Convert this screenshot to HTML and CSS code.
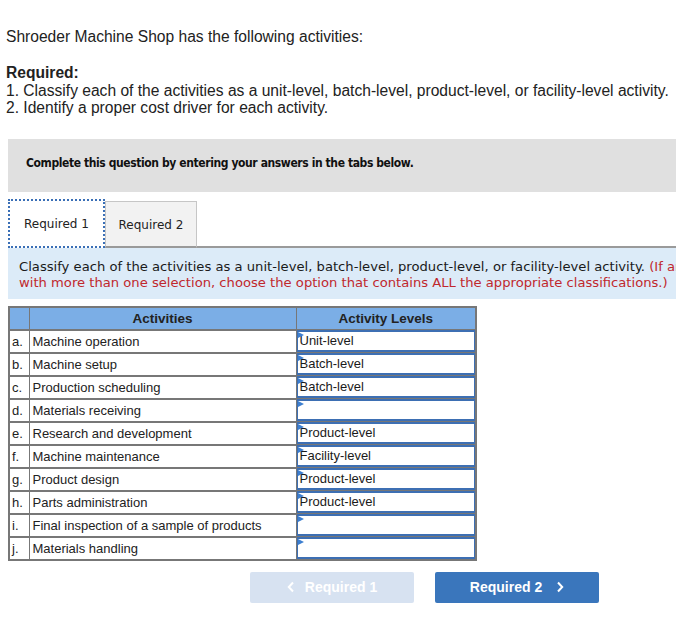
FILE: index.html
```html
<!DOCTYPE html>
<html>
<head>
<meta charset="utf-8">
<link rel="stylesheet" href="styles.css">
</head>
<body>
<div class="page">
  <p class="intro">Shroeder Machine Shop has the following activities:</p>
  <p class="req"><b>Required:</b><br>1. Classify each of the activities as a unit-level, batch-level, product-level, or facility-level activity.<br>2. Identify a proper cost driver for each activity.</p>

  <div class="panel">
    <div class="banner">Complete this question by entering your answers in the tabs below.</div>

    <div class="tabs">
      <div class="tab tab-active">Required 1</div>
      <div class="tab">Required 2</div>
      <div class="tab-rest"></div>
    </div>

    <div class="instr">Classify each of the activities as a unit-level, batch-level, product-level, or facility-level activity. <span class="warn">(If an activity qualifies</span><br><span class="warn">with more than one selection, choose the option that contains ALL the appropriate classifications.)</span></div>

    <table class="grid">
      <colgroup><col class="w-let"><col class="w-act"><col class="w-lvl"></colgroup>
      <thead>
        <tr><th></th><th>Activities</th><th>Activity Levels</th></tr>
      </thead>
      <tbody>
        <tr><td class="c-let">a.</td><td class="c-act">Machine operation</td><td class="c-lvl"><div class="sel"><span class="tri"></span>Unit-level</div></td></tr>
        <tr><td class="c-let">b.</td><td class="c-act">Machine setup</td><td class="c-lvl"><div class="sel"><span class="tri"></span>Batch-level</div></td></tr>
        <tr><td class="c-let">c.</td><td class="c-act">Production scheduling</td><td class="c-lvl"><div class="sel"><span class="tri"></span>Batch-level</div></td></tr>
        <tr><td class="c-let">d.</td><td class="c-act">Materials receiving</td><td class="c-lvl"><div class="sel"><span class="tri"></span></div></td></tr>
        <tr><td class="c-let">e.</td><td class="c-act">Research and development</td><td class="c-lvl"><div class="sel"><span class="tri"></span>Product-level</div></td></tr>
        <tr><td class="c-let">f.</td><td class="c-act">Machine maintenance</td><td class="c-lvl"><div class="sel"><span class="tri"></span>Facility-level</div></td></tr>
        <tr><td class="c-let">g.</td><td class="c-act">Product design</td><td class="c-lvl"><div class="sel"><span class="tri"></span>Product-level</div></td></tr>
        <tr><td class="c-let">h.</td><td class="c-act">Parts administration</td><td class="c-lvl"><div class="sel"><span class="tri"></span>Product-level</div></td></tr>
        <tr><td class="c-let">i.</td><td class="c-act">Final inspection of a sample of products</td><td class="c-lvl"><div class="sel"><span class="tri"></span></div></td></tr>
        <tr><td class="c-let">j.</td><td class="c-act">Materials handling</td><td class="c-lvl"><div class="sel"><span class="tri"></span></div></td></tr>
      </tbody>
    </table>

    <div class="nav">
      <button class="btn btn-off"><svg class="chev" width="8" height="12" viewBox="0 0 8 12"><polyline points="6,1.5 1.8,6 6,10.5" fill="none" stroke="currentColor" stroke-width="2"/></svg>Required 1</button>
      <button class="btn btn-on">Required 2<svg class="chev chev-r" width="8" height="12" viewBox="0 0 8 12"><polyline points="2,1.5 6.2,6 2,10.5" fill="none" stroke="currentColor" stroke-width="2"/></svg></button>
    </div>
  </div>
</div>
</body>
</html>
```

FILE: styles.css
```css
html, body {
  margin: 0;
  padding: 0;
  background: #ffffff;
  overflow: hidden;
}

.page {
  width: 676px;
  overflow: hidden;
  padding-top: 28px;
  font-family: "Liberation Sans", Arial, sans-serif;
  color: #222222;
}

.intro,
.req {
  margin: 0 0 0 6px;
  font-size: 15.6px;
  line-height: 18px;
}

.intro {
  margin-bottom: 18px;
}

.req {
  line-height: 17.5px;
}

.req b {
  font-weight: bold;
}

.panel {
  margin: 22px 0 0 8px;
  width: 720px;
}

.banner {
  background: #e0e0e0;
  height: 53px;
  box-sizing: border-box;
  padding: 16px 0 0 18px;
  font-family: "DejaVu Sans Condensed", "DejaVu Sans", sans-serif;
  font-weight: bold;
  font-size: 12px;
  letter-spacing: -0.4px;
  line-height: 16px;
  color: #111111;
}

.tabs {
  display: flex;
  align-items: flex-end;
  margin-top: 7px;
  height: 49px;
}

.tab {
  box-sizing: border-box;
  height: 47px;
  width: 92px;
  padding-top: 2px;
  display: flex;
  align-items: center;
  justify-content: center;
  font-family: "DejaVu Sans", sans-serif;
  font-size: 12px;
  color: #222222;
  background: #f2f2f2;
  border: 1px solid #c6c6c6;
  border-bottom: 2px solid #9a9a9a;
}

.tab-active {
  width: 97px;
  height: 49px;
  background: #ffffff;
  border: 2px dotted #3a6fb6;
}

.tab-rest {
  flex: 1;
  height: 0;
  border-bottom: 2px solid #9a9a9a;
}

.instr {
  background: #dcebf8;
  height: 51px;
  box-sizing: border-box;
  padding: 11px 0 0 11px;
  white-space: nowrap;
  overflow: hidden;
  font-family: "DejaVu Sans", sans-serif;
  font-size: 13.15px;
  line-height: 16px;
  color: #1a1a1a;
}

.warn {
  color: #c0282d;
}

.grid {
  margin-top: 7px;
  table-layout: fixed;
  width: 469px;
  border-collapse: collapse;
  border: 2px solid #777777;
  font-family: "Liberation Sans", Arial, sans-serif;
  font-size: 13px;
  color: #222222;
}

.w-let {
  width: 20px;
}

.w-act {
  width: 267px;
}

.w-lvl {
  width: 180px;
}

.grid th {
  background: #7baee6;
  height: 21px;
  padding: 0;
  font-weight: bold;
  font-size: 13.5px;
  text-align: center;
  color: #222222;
  border: 1px solid #777777;
  border-bottom: 2px solid #777777;
}

.grid td {
  height: 21px;
  padding: 0;
  border: 1px solid #777777;
  border-top: 2px solid #777777;
  vertical-align: middle;
  white-space: nowrap;
}

.grid tbody tr:first-child td {
  border-top: 0;
}

.grid td.c-let {
  padding-left: 2px;
}

.grid td.c-act {
  padding-left: 3px;
}

.grid td.c-lvl {
  padding: 0;
}

.sel {
  position: relative;
  box-sizing: border-box;
  height: 22px;
  margin-top: -1px;
  border: 1px solid #3d6fb3;
  border-top: 2px solid #3d6fb3;
  border-bottom: 2px solid #3d6fb3;
  background: #ffffff;
  padding-left: 2px;
  line-height: 18px;
  font-size: 13px;
  color: #1a1a1a;
}

.tri {
  position: absolute;
  left: 0;
  top: 0;
  width: 0;
  height: 0;
  border-top: 3px solid transparent;
  border-bottom: 3px solid transparent;
  border-left: 6px solid #3d7fd0;
}

.nav {
  display: flex;
  gap: 21px;
  margin: 11px 0 0 242px;
}

.btn {
  box-sizing: border-box;
  width: 164px;
  height: 31px;
  border: 0;
  border-radius: 2px;
  display: flex;
  align-items: center;
  justify-content: center;
  gap: 10px;
  font-family: "Liberation Sans", Arial, sans-serif;
  font-weight: bold;
  font-size: 14px;
  color: #ffffff;
  padding: 0;
}

.btn-off {
  background: #d7e2f1;
}

.btn-on {
  background: #3a76bc;
}

.chev-r {
  margin-left: 4px;
}
```
